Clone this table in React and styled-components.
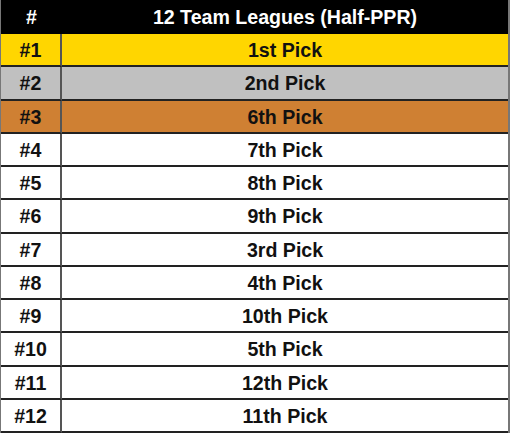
import { Fragment } from "react";
import styled, { createGlobalStyle } from "styled-components";

const Global = createGlobalStyle`
  html, body { margin: 0; padding: 0; background: #fff; }
  body { font-family: "Liberation Sans", Arial, sans-serif; }
`;

const Table = styled.div`
  width: 510px;
  height: 433px;
  display: grid;
  grid-template-columns: 61px 1fr;
  grid-template-rows: 34px repeat(12, 1fr);
  border-left: 1px solid #777;
  border-right: 2px solid #777;
  box-sizing: border-box;
`;

const Head = styled.div`
  background: #000;
  color: #fff;
  font-weight: 700;
  font-size: 19.6px;
  display: flex;
  align-items: center;
  justify-content: center;
  padding-top: 1px;
`;

const Cell = styled.div`
  background: ${({ $bg }) => $bg};
  color: #111;
  font-weight: 700;
  font-size: 19.6px;
  display: flex;
  align-items: center;
  justify-content: center;
  padding-top: 2px;
  border-bottom: 2px solid #222;
  border-right: ${({ $first }) => ($first ? "2px solid #555" : "none")};
`;

const rows = [
  ["#1", "1st Pick", "#ffd600"],
  ["#2", "2nd Pick", "#c0c0c0"],
  ["#3", "6th Pick", "#cf8033"],
  ["#4", "7th Pick"],
  ["#5", "8th Pick"],
  ["#6", "9th Pick"],
  ["#7", "3rd Pick"],
  ["#8", "4th Pick"],
  ["#9", "10th Pick"],
  ["#10", "5th Pick"],
  ["#11", "12th Pick"],
  ["#12", "11th Pick"],
];

export default function App() {
  return (
    <>
      <Global />
      <Table>
        <Head>#</Head>
        <Head>12 Team Leagues (Half-PPR)</Head>
        {rows.map(([rank, pick, bg = "#fff"]) => (
          <Fragment key={rank}>
            <Cell $bg={bg} $first>
              {rank}
            </Cell>
            <Cell $bg={bg}>{pick}</Cell>
          </Fragment>
        ))}
      </Table>
    </>
  );
}
